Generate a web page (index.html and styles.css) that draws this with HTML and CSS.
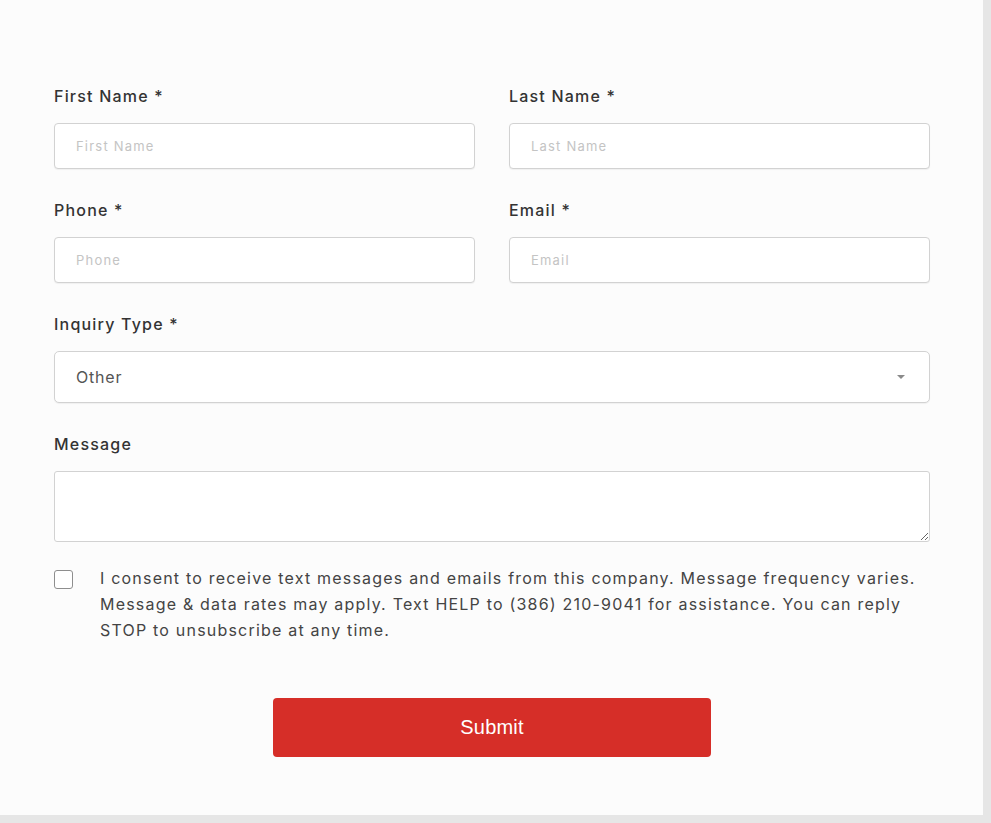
FILE: index.html
```html
<!DOCTYPE html>
<html lang="en">
<head>
<meta charset="utf-8">
<title>Contact Form</title>
<link rel="stylesheet" href="styles.css">
</head>
<body>
<div class="card">
  <form class="form">
    <div class="row">
      <div class="field">
        <label class="label">First Name *</label>
        <input class="input" type="text" placeholder="First Name">
      </div>
      <div class="field">
        <label class="label">Last Name *</label>
        <input class="input" type="text" placeholder="Last Name">
      </div>
    </div>
    <div class="row">
      <div class="field">
        <label class="label">Phone *</label>
        <input class="input" type="text" placeholder="Phone">
      </div>
      <div class="field">
        <label class="label">Email *</label>
        <input class="input" type="text" placeholder="Email">
      </div>
    </div>
    <div class="field">
      <label class="label">Inquiry Type *</label>
      <div class="select">
        <span class="select-value">Other</span>
        <svg class="caret" width="10" height="6" viewBox="0 0 10 6"><path d="M1 1 L9 1 L5 5 Z" fill="#8a8a8a"/></svg>
      </div>
    </div>
    <div class="field">
      <label class="label">Message</label>
      <textarea class="textarea"></textarea>
    </div>
    <div class="consent">
      <span class="checkbox"></span>
      <p class="consent-text">I consent to receive text messages and emails from this company. Message frequency varies. Message &amp; data rates may apply. Text HELP to (386) 210-9041 for assistance. You can reply STOP to unsubscribe at any time.</p>
    </div>
    <div class="actions">
      <button class="submit" type="button">Submit</button>
    </div>
  </form>
</div>
</body>
</html>
```

FILE: styles.css
```css
html, body {
  margin: 0;
  padding: 0;
}
body {
  background: #e6e6e6;
  width: 991px;
  height: 823px;
  overflow: hidden;
  font-family: Inter, "Noto Sans", sans-serif;
}
.card {
  width: 983px;
  height: 815px;
  background: #fcfcfc;
  box-sizing: border-box;
  padding: 86px 53px 0 54px;
}
.form {
  display: flex;
  flex-direction: column;
  gap: 31px;
}
.row {
  display: grid;
  grid-template-columns: 1fr 1fr;
  column-gap: 34px;
}
.field {
  display: flex;
  flex-direction: column;
}
.label {
  font-size: 16px;
  line-height: 20px;
  font-weight: 500;
  color: #333;
  letter-spacing: 1.2px;
  margin-bottom: 17px;
}
.input {
  height: 46px;
  box-sizing: border-box;
  border: 1px solid #d2d2d2;
  border-radius: 4px;
  background: #fff;
  padding: 0 21px;
  font-family: Inter, "Noto Sans", sans-serif;
  font-size: 13px;
  letter-spacing: 1.2px;
  color: #333;
  box-shadow: 0 1px 1px rgba(0,0,0,0.05);
  outline: none;
}
.input::placeholder {
  color: #c4c4c4;
}
.select {
  height: 52px;
  box-sizing: border-box;
  border: 1px solid #d2d2d2;
  border-radius: 5px;
  background: #fff;
  padding: 0 23px 0 21px;
  display: flex;
  align-items: center;
  justify-content: space-between;
  box-shadow: 0 1px 1px rgba(0,0,0,0.05);
}
.select-value {
  font-size: 16px;
  letter-spacing: 0.8px;
  color: #555;
}
.textarea {
  height: 71px;
  box-sizing: border-box;
  border: 1px solid #d2d2d2;
  border-radius: 3px;
  background: #fff;
  resize: vertical;
  font-family: Inter, "Noto Sans", sans-serif;
  outline: none;
}
.consent {
  display: flex;
  align-items: flex-start;
  gap: 27px;
  margin-top: -8px;
}
.checkbox {
  flex: none;
  width: 19px;
  height: 19px;
  box-sizing: border-box;
  border: 1.5px solid #8e8e8e;
  border-radius: 3px;
  background: #fff;
  margin-top: 5px;
}
.consent-text {
  margin: 0;
  font-size: 16px;
  line-height: 26px;
  color: #444;
  letter-spacing: 1.2px;
}
.actions {
  display: flex;
  justify-content: center;
  margin-top: 24px;
}
.submit {
  width: 438px;
  height: 59px;
  border: none;
  border-radius: 4px;
  background: #d62e28;
  color: #fff;
  font-family: "Liberation Sans", Arial, sans-serif;
  font-size: 20px;
  letter-spacing: 0.2px;
  cursor: pointer;
}
```
